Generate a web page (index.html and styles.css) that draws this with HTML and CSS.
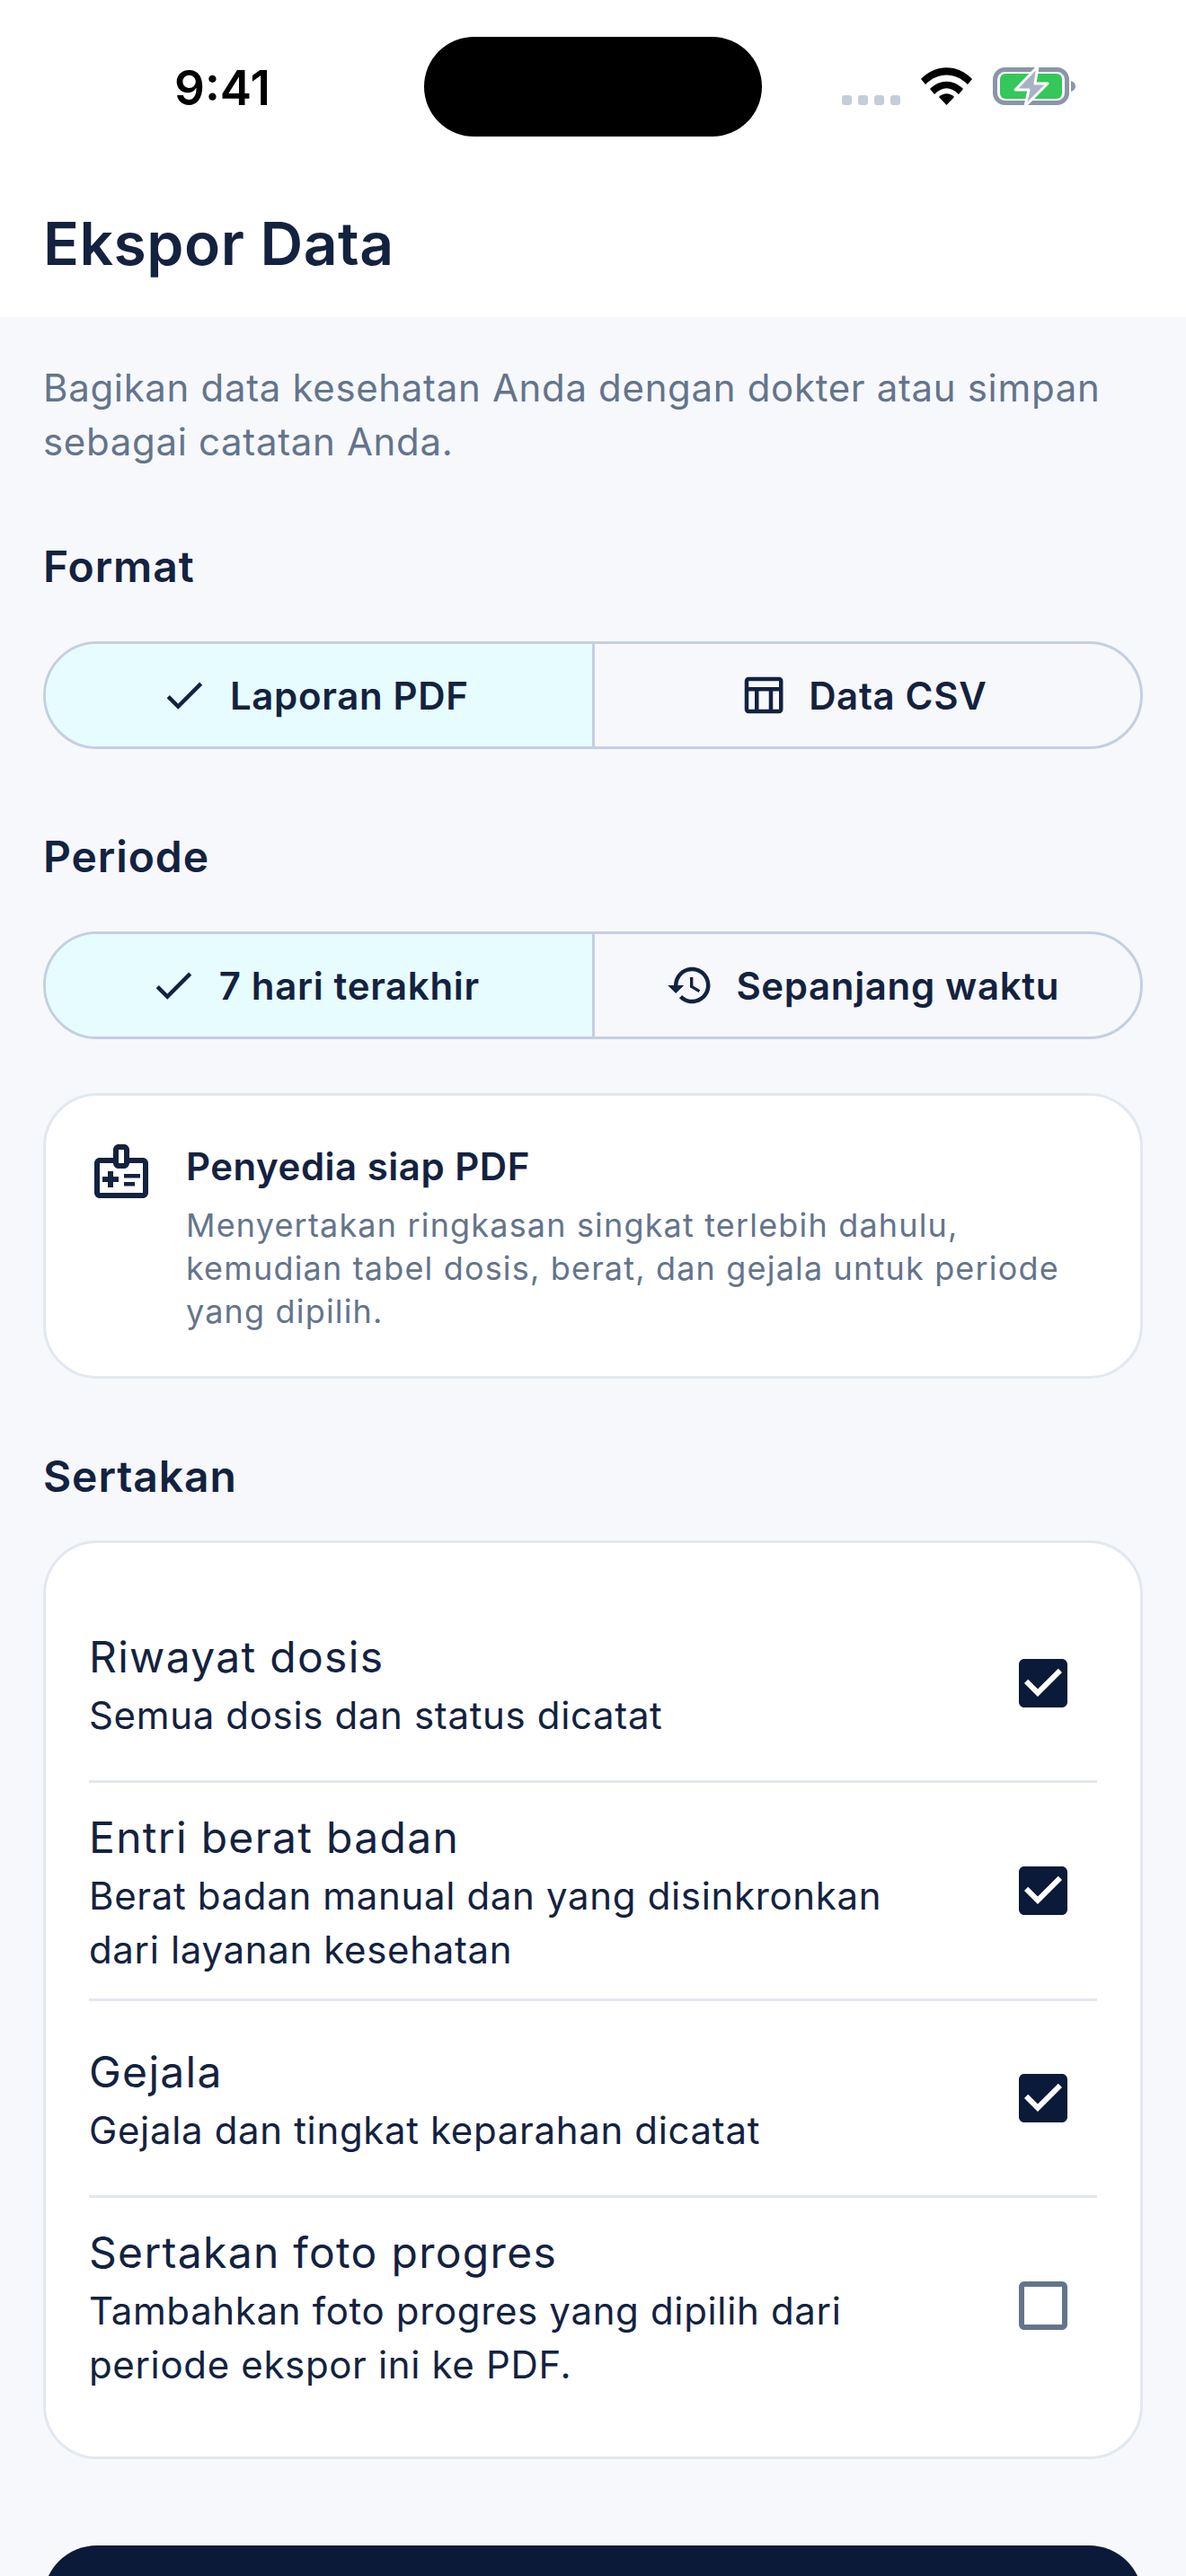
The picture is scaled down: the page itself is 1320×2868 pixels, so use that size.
FILE: index.html
```html
<!DOCTYPE html>
<html lang="id">
<head>
    <meta charset="UTF-8">
    <meta name="viewport" content="width=device-width, initial-scale=1.0">
    <title>Ekspor Data</title>
    <link rel="stylesheet" href="styles.css">
</head>
<body>

    <div class="top">
        <div class="status">
            <span class="time">9:41</span>
            <div class="island"></div>
            <div class="status-icons">
                <div class="dots"><i></i><i></i><i></i><i></i></div>
                <svg class="wifi" viewBox="0 0 57 42">
                    <path d="M0 13 C16 -4 41 -4 57 13 L52 19 C38 5 19 5 5 19 Z"/>
                    <path d="M10 24 C21 13 36 13 47 24 L42 30 C33 21 24 21 15 30 Z"/>
                    <path d="M20 33 C25 28 32 28 37 33 L28.5 42 Z"/>
                </svg>
                <svg class="battery" viewBox="0 0 92 42">
                    <rect x="2.5" y="2.5" width="80" height="37" rx="11" fill="none" stroke="#8b95a8" stroke-width="5"/>
                    <rect x="8" y="7" width="69" height="28" rx="6" fill="#34c759"/>
                    <path d="M87 15 C90 16 92 18 92 21 C92 24 90 26 87 27 Z" fill="#8b95a8"/>
                    <path d="M50 -1 L25 25 L40 25 L36 43 L61 18 L47 18 Z" fill="#a9b2c2" stroke="#fff" stroke-width="3" stroke-linejoin="round"/>
                </svg>
            </div>
        </div>
        <h1>Ekspor Data</h1>
    </div>

    <div class="content">
        <p class="intro">Bagikan data kesehatan Anda dengan dokter atau simpan sebagai catatan Anda.</p>

        <h2 class="first">Format</h2>
        <div class="segments">
            <div class="seg selected">
                <svg viewBox="0 0 24 24"><path d="M9 16.17L4.83 12l-1.42 1.41L9 19 21 7l-1.41-1.41z"/></svg>
                <span>Laporan PDF</span>
            </div>
            <div class="seg">
                <svg viewBox="0 0 24 24"><path d="M20 3H5c-1.1 0-2 .9-2 2v14c0 1.1.9 2 2 2h15c1.1 0 2-.9 2-2V5c0-1.1-.9-2-2-2zm0 2v3H5V5h15zm-5 14h-5v-9h5v9zM5 10h3v9H5v-9zm12 9v-9h3v9h-3z"/></svg>
                <span>Data CSV</span>
            </div>
        </div>

        <h2 class="period">Periode</h2>
        <div class="segments">
            <div class="seg selected">
                <svg viewBox="0 0 24 24"><path d="M9 16.17L4.83 12l-1.42 1.41L9 19 21 7l-1.41-1.41z"/></svg>
                <span>7 hari terakhir</span>
            </div>
            <div class="seg">
                <svg viewBox="0 0 24 24"><path d="M13 3c-4.97 0-9 4.03-9 9H1l3.89 3.89.07.14L9 12H6c0-3.87 3.13-7 7-7s7 3.13 7 7-3.13 7-7 7c-1.93 0-3.68-.79-4.94-2.06l-1.42 1.42C8.27 19.99 10.51 21 13 21c4.97 0 9-4.03 9-9s-4.03-9-9-9zm-1 5v5l4.28 2.54.72-1.21-3.5-2.08V8H12z"/></svg>
                <span>Sepanjang waktu</span>
            </div>
        </div>

        <div class="card provider">
            <svg viewBox="0 0 24 24"><path d="M20 7h-5V4c0-1.1-.9-2-2-2h-2c-1.1 0-2 .9-2 2v3H4c-1.1 0-2 .9-2 2v11c0 1.1.9 2 2 2h16c1.1 0 2-.9 2-2V9c0-1.1-.9-2-2-2zM11 4h2v5h-2V4zm9 16H4V9h5c0 1.1.9 2 2 2h2c1.1 0 2-.9 2-2h5v11zm-9-4H9v2H7v-2H5v-2h2v-2h2v2h2v2zm2-1.5V13h6v1.5h-6zm0 3V16h4v1.5h-4z"/></svg>
            <div>
                <h3>Penyedia siap PDF</h3>
                <p>Menyertakan ringkasan singkat terlebih dahulu, kemudian tabel dosis, berat, dan gejala untuk periode yang dipilih.</p>
            </div>
        </div>

        <h2 class="include">Sertakan</h2>
        <div class="card options">
            <div class="row">
                <div class="row-text">
                    <div class="row-title">Riwayat dosis</div>
                    <div class="row-sub">Semua dosis dan status dicatat</div>
                </div>
                <svg class="box on" viewBox="0 0 24 24"><path d="M19 3H5c-1.1 0-2 .9-2 2v14c0 1.1.9 2 2 2h14c1.1 0 2-.9 2-2V5c0-1.1-.9-2-2-2zm-9 14l-5-5 1.41-1.41L10 14.17l7.59-7.59L19 8l-9 9z"/></svg>
            </div>
            <div class="row">
                <div class="row-text">
                    <div class="row-title">Entri berat badan</div>
                    <div class="row-sub">Berat badan manual dan yang disinkronkan dari layanan kesehatan</div>
                </div>
                <svg class="box on" viewBox="0 0 24 24"><path d="M19 3H5c-1.1 0-2 .9-2 2v14c0 1.1.9 2 2 2h14c1.1 0 2-.9 2-2V5c0-1.1-.9-2-2-2zm-9 14l-5-5 1.41-1.41L10 14.17l7.59-7.59L19 8l-9 9z"/></svg>
            </div>
            <div class="row">
                <div class="row-text">
                    <div class="row-title">Gejala</div>
                    <div class="row-sub">Gejala dan tingkat keparahan dicatat</div>
                </div>
                <svg class="box on" viewBox="0 0 24 24"><path d="M19 3H5c-1.1 0-2 .9-2 2v14c0 1.1.9 2 2 2h14c1.1 0 2-.9 2-2V5c0-1.1-.9-2-2-2zm-9 14l-5-5 1.41-1.41L10 14.17l7.59-7.59L19 8l-9 9z"/></svg>
            </div>
            <div class="row">
                <div class="row-text">
                    <div class="row-title">Sertakan foto progres</div>
                    <div class="row-sub">Tambahkan foto progres yang dipilih dari periode ekspor ini ke PDF.</div>
                </div>
                <svg class="box" viewBox="0 0 24 24"><path d="M19 5v14H5V5h14m0-2H5c-1.1 0-2 .9-2 2v14c0 1.1.9 2 2 2h14c1.1 0 2-.9 2-2V5c0-1.1-.9-2-2-2z"/></svg>
            </div>
        </div>

        <div class="export-btn"></div>
    </div>

</body>
</html>
```

FILE: styles.css
```css
html, body {
    margin: 0;
    height: 2868px;
    overflow: hidden;
}
body {
    font-family: Inter, "Noto Sans", sans-serif;
    background-color: #f6f8fc;
    color: #13223f;
}
h1, h2, h3, p {
    margin: 0;
}
.top {
    background: white;
    height: 353px;
}
.status {
    height: 189px;
    position: relative;
}
.time {
    position: absolute;
    left: 194px;
    top: 66px;
    font-size: 53px;
    line-height: 64px;
    font-weight: 600;
    color: #000;
}
.island {
    position: absolute;
    left: 472px;
    top: 41px;
    width: 376px;
    height: 111px;
    border-radius: 56px;
    background: #000;
}
.status-icons {
    position: absolute;
    left: 937px;
    top: 75px;
    display: flex;
    align-items: flex-end;
}
.dots {
    display: flex;
    gap: 7px;
    margin-right: 23px;
}
.dots i {
    width: 11px;
    height: 11px;
    border-radius: 3px;
    background: #c5cddb;
}
.wifi {
    width: 57px;
    height: 42px;
    margin-right: 23px;
}
.battery {
    width: 92px;
    height: 42px;
    overflow: visible;
}
h1 {
    padding-left: 48px;
    font-size: 66px;
    line-height: 164px;
    font-weight: 600;
    letter-spacing: 0.5px;
}
.content {
    padding: 49px 48px 0;
}
.intro {
    font-size: 42px;
    line-height: 60px;
    letter-spacing: 0.66px;
    color: #64748b;
}
h2 {
    font-size: 48px;
    line-height: 72px;
    font-weight: 600;
    letter-spacing: 0.9px;
}
h2.first {
    margin-top: 73px;
}
h2.period {
    margin-top: 84px;
}
h2.include {
    margin-top: 73px;
}
.segments {
    display: flex;
    height: 120px;
    margin-top: 47px;
    border: 3px solid #c4cfe0;
    border-radius: 60px;
    overflow: hidden;
    box-sizing: border-box;
}
.seg {
    flex: 1;
    display: flex;
    align-items: center;
    justify-content: center;
    gap: 24px;
    padding-right: 10px;
    font-size: 42px;
    font-weight: 600;
    letter-spacing: 0.65px;
}
.seg + .seg {
    border-left: 3px solid #c4cfe0;
}
.seg.selected {
    background: #e6fcff;
}
.seg svg {
    width: 54px;
    height: 54px;
    fill: #13223f;
}
.card {
    background: white;
    border: 3px solid #e2e8f0;
    border-radius: 60px;
}
.provider {
    display: flex;
    gap: 36px;
    margin-top: 60px;
    padding: 48px;
}
.provider svg {
    flex: none;
    width: 72px;
    height: 72px;
    fill: #13223f;
}
.provider h3 {
    padding-top: 1px;
    font-size: 42px;
    line-height: 60px;
    font-weight: 600;
    letter-spacing: 0.5px;
}
.provider p {
    margin-top: 11px;
    font-size: 36px;
    line-height: 48px;
    letter-spacing: 1.17px;
    color: #64748b;
}
.options {
    margin-top: 35px;
    padding: 48px;
}
.row {
    display: flex;
    align-items: center;
    justify-content: space-between;
    min-height: 168px;
    padding: 24px 0;
}
.row + .row {
    border-top: 3px solid #e2e8f0;
}
.row-text {
    width: 930px;
}
.row-title {
    padding-top: 1px;
    font-size: 48px;
    line-height: 71px;
    letter-spacing: 1.3px;
}
.row-sub {
    font-size: 42px;
    line-height: 60px;
    letter-spacing: 0.65px;
}
.box {
    flex: none;
    width: 72px;
    height: 72px;
    margin-right: 24px;
    fill: #64748b;
}
.box.on {
    fill: #0a1a38;
}
.export-btn {
    height: 144px;
    margin-top: 96px;
    border-radius: 60px;
    background: #0a1a38;
}
```
